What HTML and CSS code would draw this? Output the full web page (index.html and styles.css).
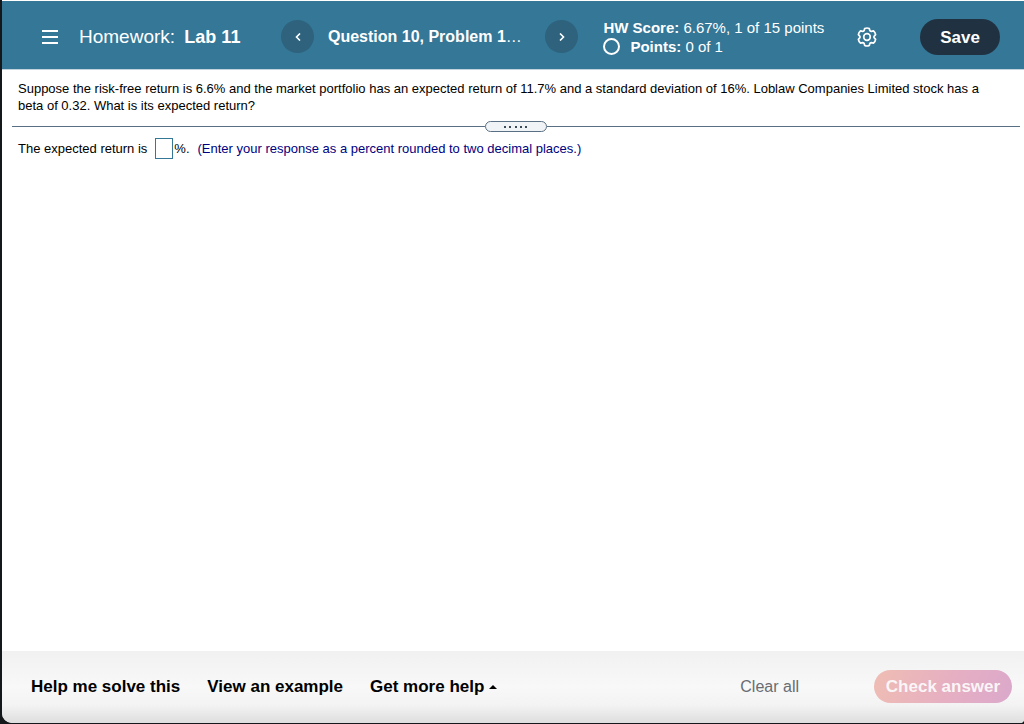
FILE: index.html
```html
<!DOCTYPE html>
<html lang="en">
<head>
  <meta charset="UTF-8">
  <title>Homework: Lab 11</title>
  <link rel="stylesheet" href="styles.css">
</head>
<body>
  <div class="player">
    <header class="header">
      <button type="button" class="icon-btn menu-btn" aria-label="Menu">
        <svg width="16" height="14" viewBox="0 0 16 14" stroke="#fff" stroke-width="2"><path d="M0 1h16M0 7h16M0 13h16"/></svg>
      </button>
      <h1 class="title">Homework: <strong>Lab 11</strong></h1>

      <nav class="question-nav">
        <button type="button" class="round-btn" aria-label="Previous question">
          <svg width="6" height="8" viewBox="0 0 6 8" fill="none" stroke="#fff" stroke-width="1.6"><path d="M5 .5L1.500 4 5 7.500"/></svg>
        </button>
        <h2 class="question">Question 10, Problem 1<span class="dots">…</span></h2>
        <button type="button" class="round-btn" aria-label="Next question">
          <svg width="6" height="8" viewBox="0 0 6 8" fill="none" stroke="#fff" stroke-width="1.6"><path d="M1 .5L4.500 4 1 7.500"/></svg>
        </button>
      </nav>

      <div class="score">
        <div><strong>HW Score:</strong> 6.67%, 1 of 15 points</div>
        <div class="points"><span class="circle"></span><span><strong>Points:</strong> 0 of 1</span></div>
      </div>

      <button type="button" class="icon-btn settings-btn" aria-label="Settings">
        <svg width="20" height="20" viewBox="0 0 20 20" fill="none" stroke="#fff" stroke-width="1.7" stroke-linejoin="round">
          <path d="M7.700 1.500Q10 .5 12.300 1.500L12.900 3.700Q13.500 4.300 14.300 4.300L16.500 3.900Q18.300 5.400 18.600 7.700L17.100 9.300Q16.900 10 17.100 10.700L18.600 12.300Q18.300 14.600 16.500 16.100L14.300 15.700Q13.500 15.700 12.900 16.300L12.300 18.500Q10 19.500 7.700 18.500L7.100 16.300Q6.500 15.700 5.700 15.700L3.500 16.100Q1.700 14.600 1.400 12.300L2.900 10.700Q3.100 10 2.900 9.300L1.400 7.700Q1.700 5.400 3.500 3.900L5.700 4.300Q6.500 4.300 7.100 3.700Z"/>
          <circle cx="10" cy="10" r="3.300"/>
        </svg>
      </button>
      <button type="button" class="save-btn">Save</button>
    </header>

    <main class="content">
      <p class="problem">Suppose the risk-free return is 6.6% and the market portfolio has an expected return of 11.7% and a standard deviation of 16%. Loblaw Companies Limited stock has a beta of 0.32. What is its expected return?</p>
      <div class="divider">
        <button type="button" class="handle" aria-label="Resize">
          <svg width="24" height="2" viewBox="0 0 24 2" fill="#3c4a57"><path d="M0 0h2v2H0zM5 0h2v2H5zM11 0h2v2h-2zM16 0h2v2h-2zM21 0h2v2h-2z"/></svg>
        </button>
      </div>
      <div class="answer">
        <label for="answer">The expected return is</label>
        <input type="text" id="answer" class="answer-box">
        <span>%.</span>
        <span class="hint">(Enter your response as a percent rounded to two decimal places.)</span>
      </div>
    </main>

    <footer class="footer">
      <a href="#" class="help-link">Help me solve this</a>
      <a href="#" class="help-link">View an example</a>
      <button type="button" class="help-link more-btn">Get more help
        <svg width="8" height="4" viewBox="0 0 8 4"><path d="M0 4L4 0l4 4z"/></svg>
      </button>
      <button type="button" class="clear-btn">Clear all</button>
      <button type="button" class="check-btn">Check answer</button>
    </footer>
  </div>
</body>
</html>
```
FILE: styles.css
```css
* { box-sizing: border-box; }
body { margin: 0; background: #15181b; font-family: "Liberation Sans", Arial, sans-serif; color: #000; }
button { font-family: inherit; border: 0; padding: 0; background: none; cursor: pointer; }
h1, h2, p { margin: 0; }
svg { display: block; }

.player { display: flex; flex-direction: column; min-height: calc(100vh - 1px); margin: 0 0 1px 2px; background: #fff; border-top: 1px solid #fff; border-radius: 0 0 4px 10px; overflow: hidden; }

/* header */
.header { display: flex; align-items: center; height: 69px; padding: 3px 24px 0 40px; background: #347797; border-bottom: 1px solid #c3d3dd; color: #fff; }
.title { margin-left: 21px; font-size: 19px; font-weight: normal; white-space: nowrap; }
.title strong { margin-left: 4px; font-size: 18px; }
.question-nav { display: flex; align-items: center; flex: 0 1 297px; justify-content: space-between; margin-left: 41px; }
.question { margin: 0 10px 0 0; font-size: 16px; white-space: nowrap; }
.dots { font-weight: normal; }
.round-btn { display: flex; align-items: center; justify-content: center; width: 33px; height: 33px; border-radius: 50%; background: #2e627d; }
.score { margin-left: 25px; font-size: 15px; line-height: 19px; white-space: nowrap; }
.points { display: flex; align-items: center; gap: 10px; }
.circle { width: 17px; height: 17px; border: 2px solid #fff; border-radius: 50%; }
.settings-btn { margin-left: auto; }
.save-btn { width: 80px; height: 36px; margin-left: 43px; padding-top: 2px; border-radius: 18px; background: #203241; color: #fff; font-size: 17px; font-weight: bold; }

/* question */
.content { flex: 1; font-size: 13px; line-height: 17px; }
.problem { padding: 10px 24px 0 16px; }
.divider { display: flex; align-items: center; margin: 7px 4px 0 10px; }
.divider::before, .divider::after { content: ""; flex: 1; height: 1px; background: #596f83; }
.handle { display: flex; align-items: center; justify-content: center; width: 62px; height: 11px; border: 1px solid #596f83; border-radius: 6px; background: #f1f4f6; }
.answer { display: flex; align-items: center; padding: 6px 16px; }
.answer-box { width: 18px; height: 21px; margin: 0 1px 0 8px; padding: 0; border: 1px solid #347797; }
.hint { margin-left: 8px; color: #000080; }

/* footer */
.footer { display: flex; align-items: center; height: 72px; padding: 0 12px 2px 29px; background: linear-gradient(#f1f1f1, #f8f8f8 50%, #f3f3f3 75%, #dedede); }
.help-link { margin-right: 27px; padding-top: 2px; color: #000; font-size: 17px; font-weight: bold; text-decoration: none; white-space: nowrap; }
.more-btn { display: flex; align-items: center; gap: 5px; }
.clear-btn { margin-left: auto; padding-top: 2px; color: #686d73; font-size: 16px; }
.check-btn { width: 138px; height: 33px; margin-left: 75px; padding-top: 2px; border-radius: 17px; background: linear-gradient(110deg, #efbdb3, #e6afc2 55%, #daa8cb); color: #faf5f7; font-size: 17px; font-weight: bold; }
```
